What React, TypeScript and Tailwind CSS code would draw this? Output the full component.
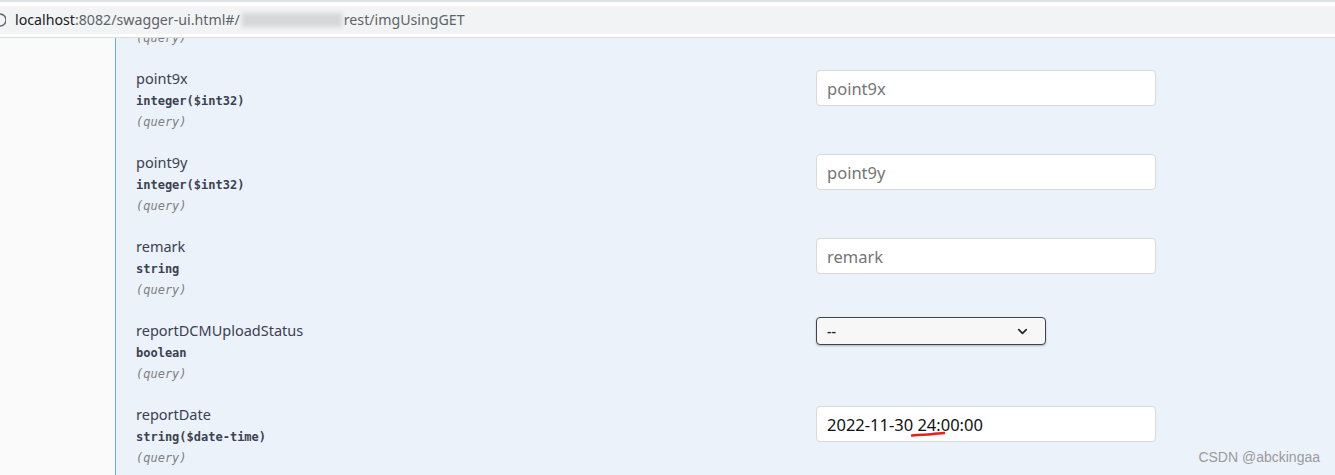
import { ChevronDown } from "lucide-react";

type Param = {
  name: string;
  type: string;
  kind: "input" | "select";
  value?: string;
};

const params: Param[] = [
  { name: "point8y", type: "integer($int32)", kind: "input" },
  { name: "point9x", type: "integer($int32)", kind: "input" },
  { name: "point9y", type: "integer($int32)", kind: "input" },
  { name: "remark", type: "string", kind: "input" },
  { name: "reportDCMUploadStatus", type: "boolean", kind: "select" },
  {
    name: "reportDate",
    type: "string($date-time)",
    kind: "input",
    value: "2022-11-30 24:00:00",
  },
];

function ParamRow({ p }: { p: Param }) {
  return (
    <div className="flex h-[84px] shrink-0">
      <div className="w-[680px] pt-[8px]">
        <div className="text-[14.5px] leading-[20px] text-[#3b4151] font-['Noto_Sans',sans-serif]">
          {p.name}
        </div>
        <div className="mt-[5px] text-[12px] leading-[16px] font-semibold text-[#3b4151] font-['DejaVu_Sans_Mono',monospace]">
          {p.type}
        </div>
        <div className="mt-[5px] text-[12px] leading-[16px] italic text-[#808080] font-['DejaVu_Sans_Mono',monospace]">
          (query)
        </div>
      </div>
      {p.kind === "input" ? (
        <div className="relative mt-[10px] h-[36px] w-[340px]">
          <input
            readOnly
            placeholder={p.name}
            defaultValue={p.value}
            className="h-full w-full rounded-[4px] border border-[#d9d9d9] bg-white px-[10px] text-[16.5px] text-[#111] placeholder:text-[#757575] font-['Noto_Sans',sans-serif] outline-none"
          />
          {p.value && (
            <svg
              className="absolute left-[95px] top-[25px]"
              width="34"
              height="6"
              viewBox="0 0 34 6"
            >
              <path
                d="M1 4.5 C8 3.6 14 3.8 20 3.2 C26 2.6 30 2.4 33 2"
                stroke="#ee1c1c"
                strokeWidth="2.6"
                fill="none"
                strokeLinecap="round"
              />
            </svg>
          )}
        </div>
      ) : (
        <div className="mt-[5px] flex h-[28px] w-[230px] items-center justify-between rounded-[4px] border border-[#41444e] bg-[#f7f7f7] pl-[10px] pr-[15px] shadow-[0_1px_2px_0_rgba(0,0,0,0.25)]">
          <span className="text-[14px] font-medium text-[#1b1b1b] font-['Noto_Sans',sans-serif]">
            --
          </span>
          <ChevronDown size={15} strokeWidth={2.6} className="text-[#222]" />
        </div>
      )}
    </div>
  );
}

export default function App() {
  return (
    <div className="relative flex h-[475px] w-[1335px] flex-col overflow-hidden bg-white">
      {/* browser chrome */}
      <div className="h-[6px] border-t-2 border-[#dee1e6] bg-white" />
      <div className="flex h-[28px] items-center bg-[#f1f3f4] text-[14.2px] font-['Noto_Sans',sans-serif]">
        <svg width="12" height="16" viewBox="0 0 12 16" className="-ml-[6px] mr-[9px]">
          <circle cx="6" cy="8" r="6" stroke="#5f6368" strokeWidth="1.4" fill="none" />
        </svg>
        <span className="text-[#202124]">localhost</span>
        <span className="text-[#5f6368]">:8082/swagger-ui.html#/</span>
        <span className="mx-[2px] h-[14px] w-[100px] bg-[#d6d7d9] blur-[2px]" />
        <span className="text-[#5f6368]">rest/imgUsingGET</span>
      </div>
      <div className="h-[4px] border-b border-[#dadce0] bg-white" />

      {/* page */}
      <div className="flex flex-1 overflow-hidden bg-[#fafafa]">
        <div className="w-[115px] shrink-0" />
        <div className="flex flex-1 flex-col overflow-hidden border-l border-[#61affe] bg-[#ebf2fa] pl-[20px]">
          <div className="-mt-[62px] flex flex-col">
            {params.map((p) => (
              <ParamRow key={p.name} p={p} />
            ))}
          </div>
        </div>
      </div>

      <div className="absolute right-[15px] bottom-[7px] text-[14px] text-[#9a9a9a] font-['Liberation_Sans',sans-serif]">
        CSDN @abckingaa
      </div>
    </div>
  );
}
